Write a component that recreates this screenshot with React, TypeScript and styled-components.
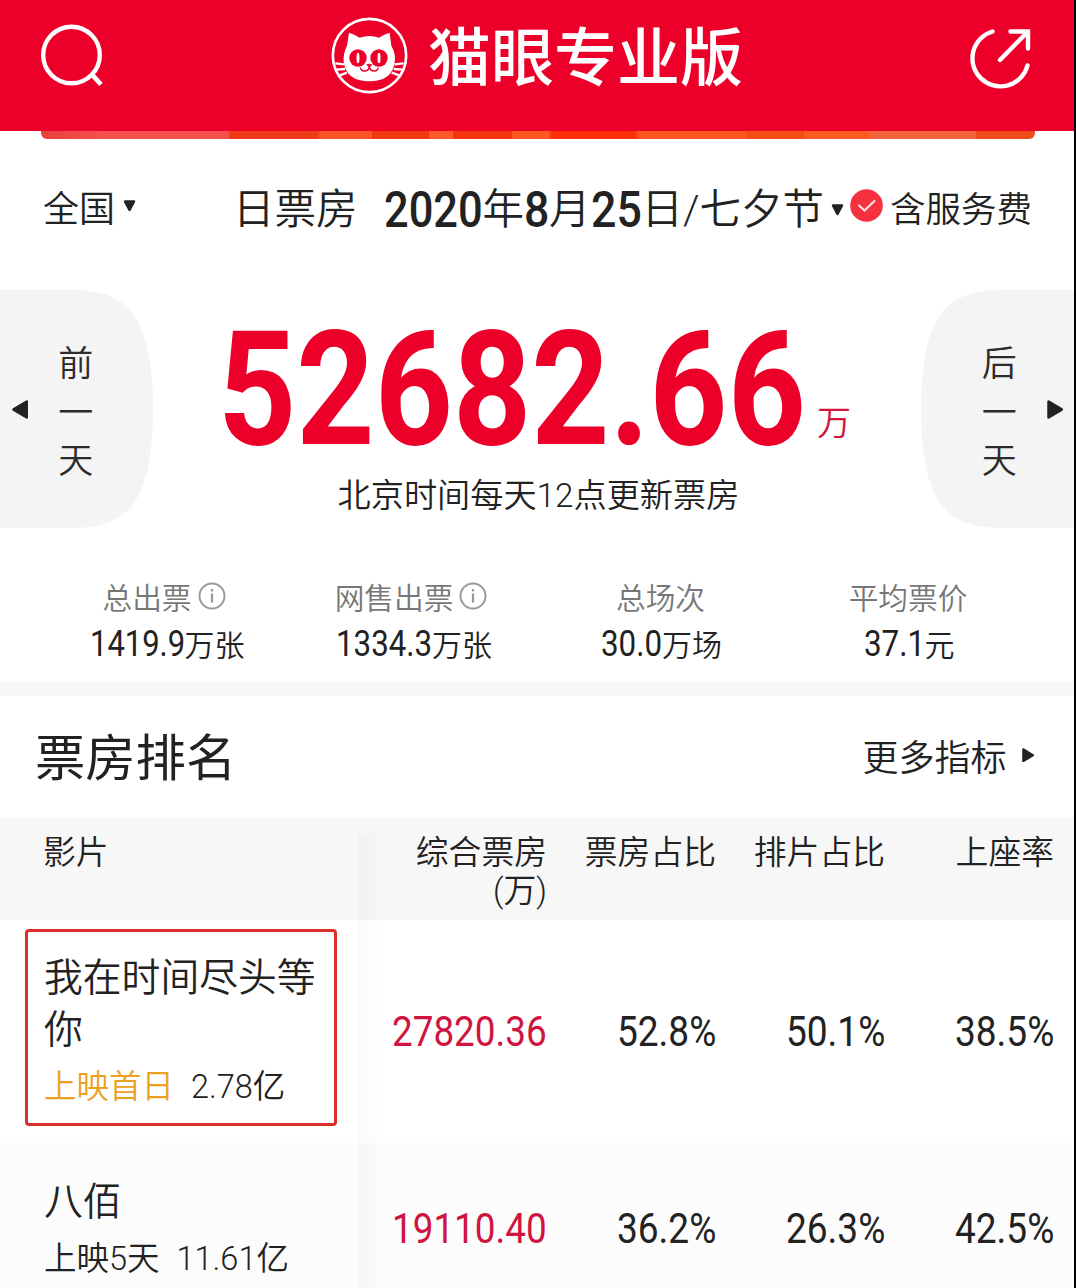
import React, { useLayoutEffect, useRef, useState } from 'react';
import styled, { createGlobalStyle } from 'styled-components';

const RED = '#ec0029';
const INK = '#222';

const GlobalStyle = createGlobalStyle`
  *, *::before, *::after { box-sizing: border-box; }
  html, body { margin: 0; padding: 0; background: #000; }
  body { font-family: Roboto, 'Noto Sans CJK SC', sans-serif; font-weight: 350; color: ${INK}; }
`;

const Screen = styled.main`
  width: 1074px;
  height: 1288px;
  overflow: hidden;
  display: flex;
  flex-direction: column;
  background: #fff;
`;

/* Text squeezed horizontally to a given width, for the condensed numerals. */
const NumBox = styled.span<{ $width: number; $size: number; $weight: number; $color?: string }>`
  display: inline-block;
  flex: none;
  width: ${(p) => p.$width}px;
  font-family: Roboto, sans-serif;
  font-size: ${(p) => p.$size}px;
  font-weight: ${(p) => p.$weight};
  line-height: 1;
  white-space: nowrap;
  color: ${(p) => p.$color ?? 'inherit'};
`;
const NumInner = styled.span`
  display: inline-block;
  transform-origin: 0 50%;
`;

type NumProps = { children: string; width: number; size: number; weight?: number; color?: string };
function Num({ children, width, size, weight = 400, color }: NumProps) {
  const ref = useRef<HTMLSpanElement>(null);
  const [scale, setScale] = useState(0.87);
  useLayoutEffect(() => {
    if (ref.current) setScale(width / ref.current.offsetWidth);
  }, [width, children]);
  return (
    <NumBox $width={width} $size={size} $weight={weight} $color={color}>
      <NumInner ref={ref} style={{ transform: `scaleX(${scale})` }}>{children}</NumInner>
    </NumBox>
  );
}

const Header = styled.header`
  flex: none;
  height: 131px;
  padding: 0 41px 20px 40px;
  display: flex;
  align-items: center;
  justify-content: space-between;
  background: ${RED};
`;
const Brand = styled.div`
  display: flex;
  align-items: center;
  margin: 0 5px 0 0;
`;
const BrandName = styled.h1`
  margin: 5px 0 0 13px;
  font-size: 63px;
  font-weight: 500;
  line-height: 85px;
  color: #fff;
`;

const Banner = styled.div`
  flex: none;
  height: 8px;
  margin: 0 39px 0 41px;
  border-radius: 0 0 6px 6px;
  background: linear-gradient(
    90deg,
    #e8403c 0, #f6504c 60px 187px, #ee3a18 189px 276px, #fb5526 280px 331px,
    #f0390f 331px 388px, #fb5a28 388px 412px, #f5350d 412px 471px, #ff5722 471px 507px,
    #fc3008 511px 594px, #fd5620 598px 705px, #f44e14 705px 763px, #fc5c22 763px 828px,
    #f3643a 828px 935px, #ee4c18 935px
  );
`;

const FilterBar = styled.div`
  flex: none;
  height: 151px;
  display: flex;
  align-items: center;
  padding: 0 0 10px 43px;
`;
const Region = styled.div`
  display: flex;
  align-items: center;
  width: 190px;
  gap: 8px;
  font-size: 36px;
  line-height: 50px;
`;
const DateLabel = styled.div`
  display: flex;
  align-items: center;
  font-size: 41.5px;
  line-height: 56px;
  white-space: nowrap;
`;
const DateGap = styled.span`
  width: 26px;
`;
const Arrow = styled.svg<{ $top?: number; $left?: number }>`
  flex: none;
  display: block;
  margin-top: ${(p) => p.$top ?? 0}px;
  margin-left: ${(p) => p.$left ?? 0}px;
`;
const Fee = styled.div`
  display: flex;
  align-items: center;
  gap: 7px;
  margin-left: 6px;
  font-size: 35.5px;
  line-height: 50px;
  white-space: nowrap;
`;
const CheckIcon = styled.svg`
  margin-top: -8px;
`;

const Hero = styled.section`
  flex: none;
  height: 238px;
  display: flex;
  justify-content: space-between;
`;
const DayButton = styled.button<{ $side: 'left' | 'right' }>`
  width: 153px;
  height: 238px;
  border: 0;
  display: flex;
  flex-direction: ${(p) => (p.$side === 'left' ? 'row' : 'row-reverse')};
  align-items: center;
  padding: ${(p) => (p.$side === 'left' ? '0 0 0 12px' : '0 11px 0 0')};
  gap: 30px;
  font: inherit;
  color: #2b2b2b;
  background: #f4f4f4;
  clip-path: path('${(p) =>
    p.$side === 'left'
      ? 'M0 0H70C120 0 153 15 153 119C153 223 120 238 70 238H0Z'
      : 'M153 0H83C33 0 0 15 0 119C0 223 33 238 83 238H153Z'}');
`;
const DayText = styled.span`
  width: 35px;
  padding-top: 10px;
  font-size: 35px;
  line-height: 48.5px;
`;
const Total = styled.div`
  display: flex;
  flex-direction: column;
  align-items: center;
`;
const TotalFigure = styled.div`
  display: flex;
  align-items: flex-start;
  gap: 11px;
  height: 181px;
  margin-right: 5px;
  padding-top: 20px;
  color: ${RED};
`;
const Unit = styled.span`
  margin-top: 96px;
  font-size: 34px;
  line-height: 1;
  color: #cf1440;
`;
const UpdateNote = styled.p`
  margin: 0 0 0 3px;
  font-size: 33.2px;
  line-height: 50px;
`;

const Stats = styled.section`
  flex: none;
  height: 154px;
  padding: 47px 42px 0 43px;
  display: grid;
  grid-template-columns: 246px 248px 247px 1fr;
`;
const Stat = styled.div`
  display: flex;
  flex-direction: column;
  align-items: center;
`;
const StatLabel = styled.div<{ $info: boolean }>`
  display: flex;
  align-items: center;
  gap: 6px;
  height: 42px;
  margin-left: ${(p) => (p.$info ? -4 : 0)}px;
  font-size: 29.7px;
  color: #777;
`;
const StatValue = styled.div`
  display: flex;
  align-items: center;
  height: 54px;
  margin-left: 2px;
  font-size: 30px;
`;
const StatUnit = styled.span`
  margin-top: -2px;
`;
const InfoIcon = styled.svg`
  margin-top: -1px;
`;

const Divider = styled.div`
  flex: none;
  height: 14px;
  background: #f7f7f7;
`;

const RankHead = styled.div`
  flex: none;
  height: 122px;
  padding: 3px 40px 0 35px;
  display: flex;
  align-items: center;
  justify-content: space-between;
`;
const RankTitle = styled.h2`
  margin: 1px 0 0;
  font-size: 50.3px;
  font-weight: 400;
  line-height: 70px;
`;
const More = styled.div`
  display: flex;
  align-items: center;
  gap: 15px;
  font-size: 36px;
  line-height: 50px;
`;

const Table = styled.section`
  position: relative;
  flex: none;
`;
const Edge = styled.div`
  position: absolute;
  left: 358px;
  top: 16px;
  bottom: 0;
  width: 24px;
  background: linear-gradient(90deg, rgba(0, 0, 0, 0.025), rgba(0, 0, 0, 0));
`;
const Row = styled.div<{ $height: number; $bg: string }>`
  display: grid;
  grid-template-columns: 358px 189px 169px 169px 169px;
  height: ${(p) => p.$height}px;
  background: ${(p) => p.$bg};
`;
const HeadCell = styled.div<{ $first?: boolean }>`
  padding-top: 16px;
  padding-left: ${(p) => (p.$first ? 43 : 0)}px;
  text-align: ${(p) => (p.$first ? 'left' : 'right')};
  font-size: 32.8px;
  line-height: 38px;
`;
const Cell = styled.div`
  display: flex;
  align-items: center;
  justify-content: flex-end;
  padding-bottom: 1px;
`;
const Film = styled.div<{ $marked?: boolean }>`
  align-self: ${(p) => (p.$marked ? 'start' : 'center')};
  width: 312px;
  height: ${(p) => (p.$marked ? '197px' : 'auto')};
  margin: ${(p) => (p.$marked ? '9px' : '3px')} 0 0 25px;
  padding: ${(p) => (p.$marked ? '20px 0 0 16px' : '0 0 0 19px')};
  border: ${(p) => (p.$marked ? '3px solid #d9302a' : '0')};
  border-radius: 4px;
`;
const FilmName = styled.div`
  width: 276px;
  font-size: 38.8px;
  line-height: 52px;
`;
const FilmMeta = styled.div<{ $gap: number }>`
  display: flex;
  align-items: center;
  gap: ${(p) => p.$gap}px;
  height: 60px;
  margin-top: -3px;
  font-size: 32.5px;
  white-space: nowrap;
`;
const Premiere = styled.span`
  color: #eda01f;
`;

function SearchIcon() {
  return (
    <svg width="64" height="64" viewBox="0 0 64 64" fill="none" stroke="#fff" strokeWidth="4.400">
      <circle cx="31.5" cy="31" r="28.300" />
      <path d="M51 49.500 L61 60.500" strokeWidth="4.800" />
    </svg>
  );
}

function ShareIcon() {
  return (
    <svg width="64" height="68" viewBox="0 -2 64 68" fill="none" stroke="#fff" strokeWidth="4.400" strokeLinecap="round">
      <path d="M23.500 7.500 A28 28 0 1 0 58.500 41.500" />
      <path d="M31 36 L58 8.500 M41.500 7.500 H59 V24.500" />
    </svg>
  );
}

function CatLogo() {
  return (
    <svg width="90" height="90" viewBox="0 0 270 270">
      <circle cx="133.500" cy="133.500" r="110" fill="none" stroke="#fff" strokeWidth="8" />
      <path
        fill="#fff"
        d="M72 65 Q88 69 104 80 Q133 70 162 80 Q178 69 194 65 L199 104 Q213 128 209 153 Q202 211 133 211 Q64 211 56 153 Q54 128 66 104Z"
      />
      <circle cx="99" cy="141" r="26" fill={RED} />
      <circle cx="162" cy="141" r="26" fill={RED} />
      <ellipse cx="99" cy="141" rx="4.500" ry="16" fill="#fff" />
      <ellipse cx="162" cy="141" rx="4.500" ry="16" fill="#fff" />
      <path d="M126 161 Q133 158 140 161 L133 169Z" fill={RED} stroke={RED} strokeWidth="3" />
      <path d="M133 166 Q132 180 118 180 Q108 180 106 170 M133 166 Q134 180 148 180 Q158 180 160 170" fill="none" stroke={RED} strokeWidth="4" />
      <path d="M31 157 L57 160 M34 176 L60 174 M42 194 L66 185" stroke="#fff" strokeWidth="7" />
      <path d="M236 157 L208 160 M233 176 L206 174 M225 194 L200 185" stroke="#fff" strokeWidth="7" />
    </svg>
  );
}

function DownArrow({ top, left }: { top?: number; left?: number }) {
  return (
    <Arrow $top={top} $left={left} width="13" height="12" viewBox="0 0 13 12">
      <path d="M2 1.500 H11 L6.500 10Z" fill={INK} stroke={INK} strokeWidth="2.500" strokeLinejoin="round" />
    </Arrow>
  );
}

function SideArrow({ size, flip, top }: { size: number; flip?: boolean; top?: number }) {
  return (
    <Arrow $top={top} width={size * 0.86} height={size} viewBox="0 0 15.5 18">
      <path
        d={flip ? 'M14 1.500 V16.500 L1.500 9Z' : 'M1.500 1.500 V16.500 L14 9Z'}
        fill={INK}
        stroke={INK}
        strokeWidth="2.500"
        strokeLinejoin="round"
      />
    </Arrow>
  );
}

function Info() {
  return (
    <InfoIcon width="28" height="28" viewBox="0 0 28 28" fill="none" stroke="#999" strokeWidth="2">
      <circle cx="14" cy="14" r="12.500" />
      <path d="M14 11.500 V20.500 M14 7 V9.500" strokeWidth="2.200" />
    </InfoIcon>
  );
}

const stats = [
  { label: '总出票', info: true, num: '1419.9', width: 95, unit: '万张' },
  { label: '网售出票', info: true, num: '1334.3', width: 96, unit: '万张' },
  { label: '总场次', info: false, num: '30.0', width: 61, unit: '万场' },
  { label: '平均票价', info: false, num: '37.1', width: 61, unit: '元' },
];

const films = [
  { name: '我在时间尽头等你', status: '上映首日', premiere: true, total: '2.78亿', gap: 17, height: 223, bg: '#fff', gross: '27820.36', shares: ['52.8%', '50.1%', '38.5%'] },
  { name: '八佰', status: '上映5天', premiere: false, total: '11.61亿', gap: 17, height: 172, bg: '#fcfcfc', gross: '19110.40', shares: ['36.2%', '26.3%', '42.5%'] },
];

export default function App() {
  return (
    <Screen>
      <GlobalStyle />
      <Header>
        <SearchIcon />
        <Brand>
          <CatLogo />
          <BrandName>猫眼专业版</BrandName>
        </Brand>
        <ShareIcon />
      </Header>
      <Banner />
      <FilterBar>
        <Region>
          全国
          <DownArrow top={-8} />
        </Region>
        <DateLabel>
          日票房
          <DateGap />
          <Num width={99} size={50} weight={500}>2020</Num>年
          <Num width={25} size={50} weight={500}>8</Num>月
          <Num width={51} size={50} weight={500}>25</Num>日/七夕节
          <DownArrow top={0} left={7} />
        </DateLabel>
        <Fee>
          <CheckIcon width="33" height="33" viewBox="0 0 33 33">
            <circle cx="16.500" cy="16.500" r="16.300" fill="#f5303f" />
            <path d="M9 16.500 L14.500 21.500 L24.500 12" fill="none" stroke="#ffe0e0" strokeWidth="2.200" strokeLinecap="round" />
          </CheckIcon>
          含服务费
        </Fee>
      </FilterBar>
      <Hero>
        <DayButton $side="left">
          <SideArrow size={19} flip />
          <DayText>前一天</DayText>
        </DayButton>
        <Total>
          <TotalFigure>
            <Num width={588} size={160} weight={700}>52682.66</Num>
            <Unit>万</Unit>
          </TotalFigure>
          <UpdateNote>北京时间每天12点更新票房</UpdateNote>
        </Total>
        <DayButton $side="right">
          <SideArrow size={19} />
          <DayText>后一天</DayText>
        </DayButton>
      </Hero>
      <Stats>
        {stats.map((s) => (
          <Stat key={s.label}>
            <StatLabel $info={s.info}>
              {s.label}
              {s.info && <Info />}
            </StatLabel>
            <StatValue>
              <Num width={s.width} size={36.5}>{s.num}</Num>
              <StatUnit>{s.unit}</StatUnit>
            </StatValue>
          </Stat>
        ))}
      </Stats>
      <Divider />
      <RankHead>
        <RankTitle>票房排名</RankTitle>
        <More>
          更多指标
          <SideArrow size={14.5} top={-7} />
        </More>
      </RankHead>
      <Table>
        <Row $height={102} $bg="#f7f7f7">
          <HeadCell $first>影片</HeadCell>
          <HeadCell>综合票房<br />(万)</HeadCell>
          <HeadCell>票房占比</HeadCell>
          <HeadCell>排片占比</HeadCell>
          <HeadCell>上座率</HeadCell>
        </Row>
        {films.map((f) => (
          <Row key={f.name} $height={f.height} $bg={f.bg}>
            <Film $marked={f.premiere}>
              <FilmName>{f.name}</FilmName>
              <FilmMeta $gap={f.gap}>
                {f.premiere ? <Premiere>{f.status}</Premiere> : <span>{f.status}</span>}
                <span>{f.total}</span>
              </FilmMeta>
            </Film>
            <Cell>
              <Num width={155} size={43} color="#cf1440">{f.gross}</Num>
            </Cell>
            {f.shares.map((v) => (
              <Cell key={v}>
                <Num width={99} size={43}>{v}</Num>
              </Cell>
            ))}
          </Row>
        ))}
        <Edge />
      </Table>
    </Screen>
  );
}
